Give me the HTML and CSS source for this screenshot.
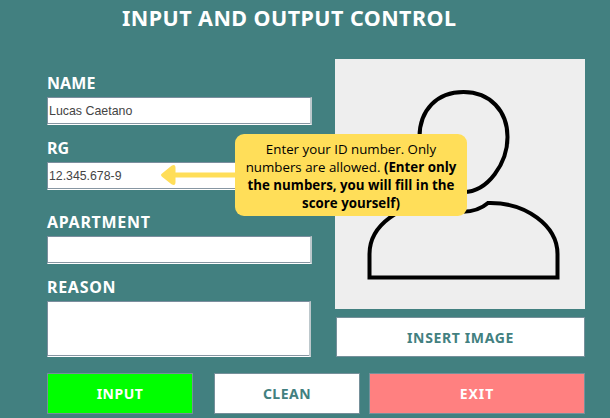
FILE: index.html
```html
<!DOCTYPE html>
<html lang="en">
<head>
<meta charset="utf-8">
<title>Input and Output Control</title>
<link rel="stylesheet" href="styles.css">
</head>
<body>
<main class="window">
  <h1 class="title">INPUT AND OUTPUT CONTROL</h1>
  <div class="content">
    <form class="form">
      <div class="group"><label class="label name">NAME</label><div class="field">Lucas Caetano</div></div>
      <div class="group rg-group"><label class="label rg">RG</label><div class="field number">12.345.678-9</div></div>
      <div class="group"><label class="label apartment">APARTMENT</label><div class="field"></div></div>
      <div class="group"><label class="label reason">REASON</label><div class="field area"></div></div>
    </form>
    <section class="side">
      <div class="photo">
        <svg width="250" height="250" viewBox="335 59 250 250" fill="none" stroke="#000" stroke-width="4">
          <path d="M463.500 92C437 92 419.500 110 419.500 137C419.500 165 439 192 463.500 192C488 192 507.500 163 507.500 137C507.500 111 490 92 463.500 92Z"/>
          <path d="M369.500 277.500V254C369.500 225 401 203 438 203C450 214 474 215 488 203C526 202 557.500 226 557.500 254V277.500Z"/>
        </svg>
      </div>
      <button class="button insert">INSERT IMAGE</button>
    </section>
  </div>
  <div class="actions">
    <button class="button input">INPUT</button>
    <button class="button clean">CLEAN</button>
    <button class="button exit">EXIT</button>
  </div>
  <svg class="arrow" width="76" height="22" viewBox="0 0 76 22" fill="#ffde59">
    <path d="M2 9.500L11.500 1.700Q15.500 -.5 15.500 4V8.500H76V13.500H15.500V18Q15.500 22.500 11.500 20.300L2 12.700Q0 11 2 9.500Z"/>
  </svg>
  <div class="callout">
    <div>Enter your ID number. Only</div>
    <div>numbers are allowed. <b>(Enter only</b></div>
    <div><b>the numbers, you will fill in the</b></div>
    <div><b>score yourself)</b></div>
  </div>
</main>
</body>
</html>
```
FILE: styles.css
```css
* { box-sizing: border-box; }
body { margin: 0; }
.window {
  position: relative;
  width: 610px;
  height: 418px;
  overflow: hidden;
  background: #428080;
  font-family: "Noto Sans", sans-serif;
}
.title {
  margin: 0;
  height: 59px;
  padding: 3px 0 0 122px;
  color: #fff;
  font-size: 21.5px;
  letter-spacing: .44px;
  line-height: 30px;
  white-space: nowrap;
}
.content { display: flex; gap: 23px; height: 314px; padding-left: 47px; }
.form { width: 265px; padding-top: 12px; }
.group { height: 65px; }
.rg-group { height: 74px; }
.label {
  display: block;
  height: 26px;
  color: #fff;
  font-size: 16px;
  font-weight: 700;
  letter-spacing: .7px;
  line-height: 25px;
}
.name, .rg { letter-spacing: .1px; }
.field {
  height: 28px;
  padding-left: 1px;
  border: 1px solid #7b8e9e;
  border-right: 2px solid #bdc8cc;
  border-bottom-color: #fff;
  background: #fff;
  box-shadow: inset 0 -1px #8796a2;
  color: #444;
  font: 12.4px/27px "Liberation Sans", sans-serif;
}
.number { font-size: 12.3px; }
.area { width: 264px; height: 56px; }
.side { width: 250px; }
.photo { height: 250px; background: #eee; }
.photo svg { display: block; }
.button {
  height: 41px;
  padding: 0;
  border: 1px solid #75909a;
  color: #fff;
  font: 700 14px/39px "Noto Sans", sans-serif;
  letter-spacing: .5px;
}
.insert { width: 249px; height: 40px; margin: 8px 0 0 1px; background: #fff; color: #428080; letter-spacing: .63px; }
.actions { display: flex; padding-left: 47px; }
.input { width: 146px; background: #0f0; }
.clean { width: 146px; margin-left: 21px; background: #fff; color: #428080; }
.exit { width: 216px; margin-left: 9px; background: #ff8080; letter-spacing: 1px; }
.arrow { position: absolute; left: 160px; top: 164px; }
.callout {
  position: absolute;
  left: 235px;
  top: 134px;
  width: 232px;
  height: 82px;
  padding-top: 6px;
  border-radius: 9px;
  background: #ffde59;
  color: #000;
  font: 13.3px/18px "Open Sans", sans-serif;
  text-align: center;
  white-space: nowrap;
}
```
